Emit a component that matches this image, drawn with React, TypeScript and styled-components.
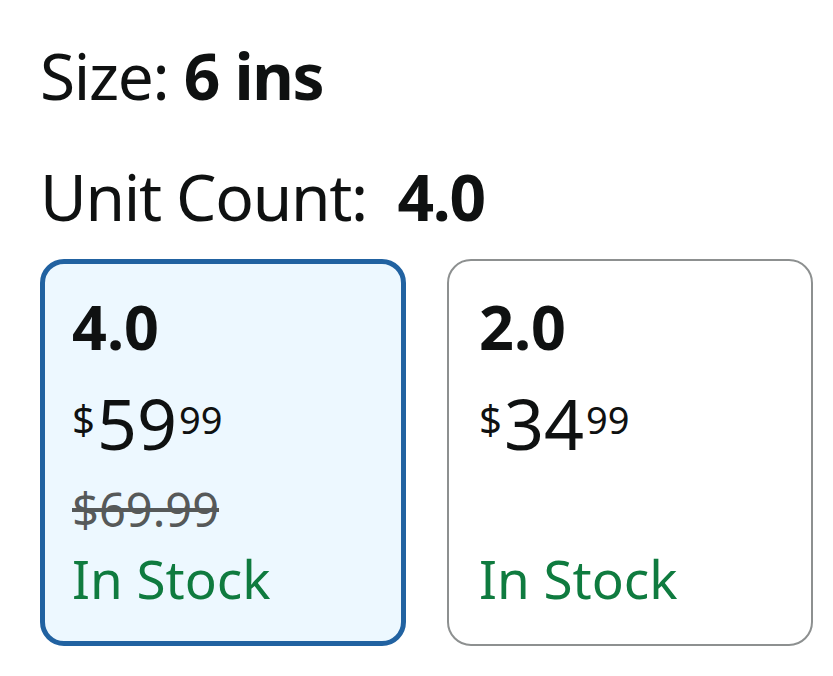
import styled, { createGlobalStyle } from "styled-components"

const GlobalStyle = createGlobalStyle`
  body {
    margin: 0;
    background: #ffffff;
    color: #0f1111;
    font-family: "Noto Sans", "Liberation Sans", sans-serif;
  }
`

const Page = styled.div`
  padding: 36px 20px 0 40px;
`

const Label = styled.div<{ $gap?: number }>`
  font-size: 64px;
  line-height: 80px;
  letter-spacing: -1.3px;
  margin-top: ${p => p.$gap || 0}px;
  white-space: pre;
  b {
    font-weight: 700;
  }
`

const Options = styled.div`
  display: grid;
  grid-template-columns: 366px 366px;
  column-gap: 41px;
  margin-top: 22px;
`

const Option = styled.div<{ $selected?: boolean }>`
  box-sizing: border-box;
  height: 387px;
  display: flex;
  flex-direction: column;
  border-radius: 24px;
  border: ${p => (p.$selected ? "5px solid #2162a1" : "2px solid #8d9090")};
  background: ${p => (p.$selected ? "#edf8ff" : "#ffffff")};
  padding: ${p => (p.$selected ? "28px 27px 32px 27px" : "31px 30px 35px 30px")};
`

const OptionName = styled.div`
  font-size: 61px;
  font-weight: 700;
  line-height: 70px;
`

const Price = styled.div`
  display: flex;
  align-items: flex-start;
  margin-top: 26px;
  height: 70px;
`

const PriceSymbol = styled.span`
  font-size: 40px;
  line-height: 40px;
  margin-top: 11px;
  margin-right: 2px;
`

const PriceWhole = styled.span`
  font-size: 70px;
  line-height: 70px;
`

const PriceFraction = styled.span`
  font-size: 38px;
  line-height: 38px;
  margin-top: 12px;
  margin-left: 2px;
`

const ListPrice = styled.div`
  font-size: 47px;
  line-height: 55px;
  color: #565959;
  text-decoration: line-through;
  margin-top: 24px;
`

const Stock = styled.div`
  font-size: 53px;
  line-height: 60px;
  color: #0f7b3f;
  margin-top: auto;
`

const options = [
  { name: "4.0", whole: "59", fraction: "99", list: "$69.99", selected: true },
  { name: "2.0", whole: "34", fraction: "99", list: "", selected: false },
]

export default function App() {
  return (
    <>
      <GlobalStyle />
      <Page>
        <Label>
          Size: <b>6 ins</b>
        </Label>
        <Label $gap={41}>
          {"Unit Count:  "}
          <b>4.0</b>
        </Label>
        <Options>
          {options.map(o => (
            <Option key={o.name} $selected={o.selected}>
              <OptionName>{o.name}</OptionName>
              <Price>
                <PriceSymbol>$</PriceSymbol>
                <PriceWhole>{o.whole}</PriceWhole>
                <PriceFraction>{o.fraction}</PriceFraction>
              </Price>
              {o.list && <ListPrice>{o.list}</ListPrice>}
              <Stock>In Stock</Stock>
            </Option>
          ))}
        </Options>
      </Page>
    </>
  )
}
